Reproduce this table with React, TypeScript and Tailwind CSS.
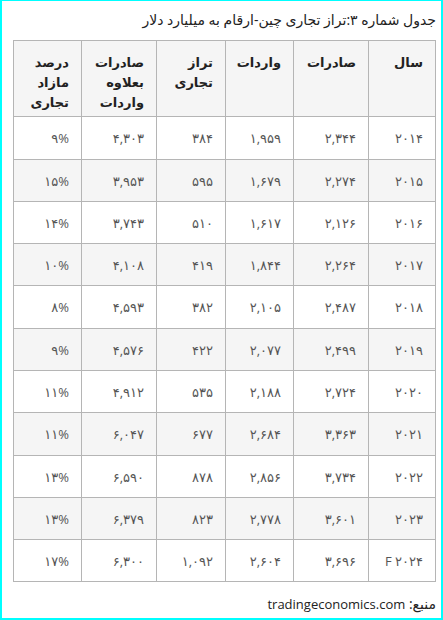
import React from "react";

const rows: { c: string[]; h: string; alt: boolean }[] = [
  { c: ["۲۰۱۴", "۲,۳۴۴", "۱,۹۵۹", "۳۸۴", "۴,۳۰۳", "۹%"], h: "h-[43px]", alt: false },
  { c: ["۲۰۱۵", "۲,۲۷۴", "۱,۶۷۹", "۵۹۵", "۳,۹۵۳", "۱۵%"], h: "h-[42px]", alt: true },
  { c: ["۲۰۱۶", "۲,۱۲۶", "۱,۶۱۷", "۵۱۰", "۳,۷۴۳", "۱۴%"], h: "h-[42px]", alt: false },
  { c: ["۲۰۱۷", "۲,۲۶۴", "۱,۸۴۴", "۴۱۹", "۴,۱۰۸", "۱۰%"], h: "h-[42px]", alt: true },
  { c: ["۲۰۱۸", "۲,۴۸۷", "۲,۱۰۵", "۳۸۲", "۴,۵۹۳", "۸%"], h: "h-[43px]", alt: false },
  { c: ["۲۰۱۹", "۲,۴۹۹", "۲,۰۷۷", "۴۲۲", "۴,۵۷۶", "۹%"], h: "h-[42px]", alt: true },
  { c: ["۲۰۲۰", "۲,۷۲۴", "۲,۱۸۸", "۵۳۵", "۴,۹۱۲", "۱۱%"], h: "h-[42px]", alt: false },
  { c: ["۲۰۲۱", "۳,۳۶۳", "۲,۶۸۴", "۶۷۷", "۶,۰۴۷", "۱۱%"], h: "h-[43px]", alt: true },
  { c: ["۲۰۲۲", "۳,۷۳۴", "۲,۸۵۶", "۸۷۸", "۶,۵۹۰", "۱۳%"], h: "h-[42px]", alt: false },
  { c: ["۲۰۲۳", "۳,۶۰۱", "۲,۷۷۸", "۸۲۳", "۶,۳۷۹", "۱۳%"], h: "h-[42px]", alt: true },
  { c: ["۲۰۲۴ F", "۳,۶۹۶", "۲,۶۰۴", "۱,۰۹۲", "۶,۳۰۰", "۱۷%"], h: "h-[42px]", alt: false },
];

const widths = ["w-[67px]", "w-[75px]", "w-[68px]", "w-[69px]", "w-[75px]", "w-[68px]"];

export default function App() {
  return (
    <div
      dir="rtl"
      className="w-[443px] h-[620px] bg-white border-[#00ffff] border-t border-x-2 border-b-2 pr-[5px] pl-[12px] text-[#333]"
      style={{ fontFamily: '"Open Sans", "DejaVu Sans", sans-serif' }}
    >
      <p className="pt-[9px] text-[14px] leading-[20px] text-[#222]">
        جدول شماره ۳:تراز تجاری چین-ارقام به میلیارد دلار
      </p>
      <table className="mt-[10px] w-[422px] table-fixed border-collapse text-[13px]">
        <colgroup>
          {widths.map((w, i) => (
            <col key={i} className={w} />
          ))}
        </colgroup>
        <thead>
          <tr className="h-[76px] bg-[#f5f5f5]">
            {[
              ["سال"],
              ["صادرات"],
              ["واردات"],
              ["تراز", "تجاری"],
              ["صادرات", "بعلاوه", "واردات"],
              ["درصد", "مازاد", "تجاری"],
            ].map((lines, i) => (
              <th
                key={i}
                className="border border-[#b5b5b5] align-top text-right font-bold pr-[12px] pt-[11px] text-[13px] leading-[20px] text-[#222]"
              >
                {lines.map((l, j) => (
                  <div key={j}>{l}</div>
                ))}
              </th>
            ))}
          </tr>
        </thead>
        <tbody>
          {rows.map((r, i) => (
            <tr key={i} className={`${r.h} ${r.alt ? "bg-[#f5f5f5]" : "bg-white"}`}>
              {r.c.map((v, j) => (
                <td
                  key={j}
                  className="border border-[#b5b5b5] text-right align-middle pr-[12px] text-[#555] leading-[18px]"
                >
                  {v}
                </td>
              ))}
            </tr>
          ))}
        </tbody>
      </table>
      <p className="mt-[12px] text-[14px] leading-[20px] text-[#222]">
        منبع: <span className="text-[13px]">tradingeconomics.com</span>
      </p>
    </div>
  );
}
